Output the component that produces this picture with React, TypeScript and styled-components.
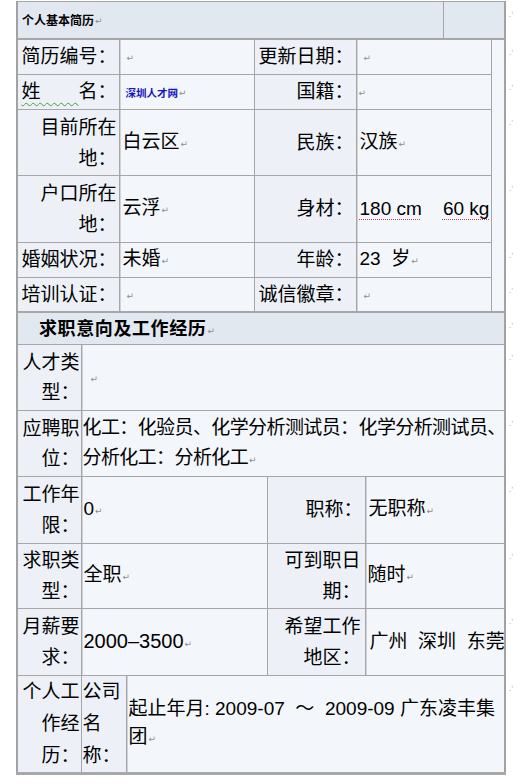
import React from "react";
import styled, { createGlobalStyle } from "styled-components";

const Global = createGlobalStyle`
  html, body { margin: 0; padding: 0; background: #ffffff; }
  body { font-family: "Liberation Sans", "Noto Sans CJK SC", sans-serif; color: #000; }
`;

const Page = styled.div`
  width: 519px;
  height: 784px;
  overflow: hidden;
  padding: 1px 0 0 16px;
  box-sizing: border-box;
`;

const Table = styled.table`
  border-collapse: collapse;
  table-layout: fixed;
  width: 503px;
`;

type Tone = "label" | "value" | "head";

const Row = styled.tr<{ $h: number }>`
  height: ${(p) => p.$h}px;
`;

const Cell = styled.td<{
  $tone?: Tone;
  $align?: "left" | "right";
  $lh?: number;
  $pl?: number;
  $pr?: number;
  $first?: boolean;
  $edge?: boolean;
  $bottom?: boolean;
  $size?: number;
  $ls?: number;
  $valign?: "top" | "middle";
}>`
  border: 1px solid #a6a6a6;
  ${(p) => (p.$first ? "border-left: 2px solid #a2a2a2;" : "")}
  ${(p) => (p.$edge ? "border-right: 2px solid #a2a2a2;" : "")}
  ${(p) => (p.$bottom ? "border-bottom: 3px solid #a8a8a8;" : "")}
  background: ${(p) =>
    p.$tone === "head" ? "#e2e8f0" : p.$tone === "label" ? "#edf1f7" : "#f3f6fa"};
  text-align: ${(p) => p.$align ?? "left"};
  vertical-align: ${(p) => p.$valign ?? "middle"};
  padding: 0 ${(p) => p.$pr ?? 2}px 0 ${(p) => p.$pl ?? 3}px;
  font-size: ${(p) => p.$size ?? 19}px;
  letter-spacing: ${(p) => p.$ls ?? 0}px;
  line-height: ${(p) => p.$lh ?? 24}px;
  white-space: nowrap;
  overflow: hidden;
`;

const ValueCell = styled(Cell)`
  box-shadow: inset 1px 0 0 #cfd3d8;
`;

const Mark = styled.td`
  border: none;
  background: transparent;
  vertical-align: top;
  padding: 9px 0 0 3px;
  font-family: "DejaVu Sans", sans-serif;
  font-size: 7px;
  line-height: 8px;
  color: #8c8c8c;
  white-space: nowrap;
`;

const Ret = styled.span`
  font-family: "DejaVu Sans", sans-serif;
  font-size: 9px;
  font-weight: normal;
  letter-spacing: 0;
  color: #8e8e8e;
  margin-left: 1px;
  vertical-align: 1px;
`;

const HeadTitle = styled.span`
  font-family: "Noto Sans CJK SC", sans-serif;
  font-weight: 700;
  font-size: 12px;
`;

const SectionTitle = styled.span`
  font-family: "Noto Sans CJK SC", sans-serif;
  font-weight: 700;
  font-size: 18px;
  letter-spacing: 0.6px;
`;

const Site = styled.span`
  font-family: "Noto Sans CJK SC", sans-serif;
  font-weight: 700;
  font-size: 10.5px;
  color: #1414c4;
`;

const Wavy = styled.span`
  text-decoration: underline wavy #3aa33a;
  text-decoration-thickness: 1px;
  text-underline-offset: 4px;
`;

const Dotted = styled.span`
  text-decoration: underline dotted #d03a6a;
  text-decoration-thickness: 1px;
  text-underline-offset: 4px;
`;

const R = () => <Ret>↵</Ret>;
const M = () => <Mark>.ˈ</Mark>;

export default function App() {
  return (
    <Page>
      <Global />
      <Table>
        <colgroup>
          <col style={{ width: 426 }} />
          <col style={{ width: 62 }} />
          <col style={{ width: 15 }} />
        </colgroup>
        <tbody>
          <Row $h={37}>
            <Cell $tone="head" $first $pl={4}>
              <HeadTitle>个人基本简历</HeadTitle>
              <R />
            </Cell>
            <Cell $tone="head" $edge />
            <M />
          </Row>
        </tbody>
      </Table>

      <Table>
        <colgroup>
          <col style={{ width: 102 }} />
          <col style={{ width: 135 }} />
          <col style={{ width: 102 }} />
          <col style={{ width: 135 }} />
          <col style={{ width: 14 }} />
          <col style={{ width: 15 }} />
        </colgroup>
        <tbody>
          <Row $h={35}>
            <Cell $tone="label" $first $align="right">简历编号：</Cell>
            <ValueCell $pl={6}><R /></ValueCell>
            <Cell $tone="label" $align="right">更新日期：</Cell>
            <ValueCell $pl={6}><R /></ValueCell>
            <Cell rowSpan={6} $edge />
            <M />
          </Row>
          <Row $h={35}>
            <Cell $tone="label" $first $align="right">
              <Wavy>姓　　</Wavy>名：
            </Cell>
            <ValueCell $pl={6}>
              <Site>深圳人才网</Site>
              <R />
            </ValueCell>
            <Cell $tone="label" $align="right">国籍：</Cell>
            <ValueCell $pl={1}><R /></ValueCell>
            <M />
          </Row>
          <Row $h={66}>
            <Cell $tone="label" $first $align="right" $lh={31}>
              目前所在
              <br />
              地：
            </Cell>
            <ValueCell>
              白云区
              <R />
            </ValueCell>
            <Cell $tone="label" $align="right">民族：</Cell>
            <ValueCell>
              汉族
              <R />
            </ValueCell>
            <M />
          </Row>
          <Row $h={67}>
            <Cell $tone="label" $first $align="right" $lh={31}>
              户口所在
              <br />
              地：
            </Cell>
            <ValueCell>
              云浮
              <R />
            </ValueCell>
            <Cell $tone="label" $align="right">身材：</Cell>
            <ValueCell>
              <Dotted>180 cm</Dotted>
              {"\u00a0\u00a0\u00a0\u00a0"}
              <Dotted>60 kg</Dotted>
            </ValueCell>
            <M />
          </Row>
          <Row $h={35}>
            <Cell $tone="label" $first $align="right">婚姻状况：</Cell>
            <ValueCell>
              未婚
              <R />
            </ValueCell>
            <Cell $tone="label" $align="right">年龄：</Cell>
            <ValueCell>
              23{"\u00a0\u00a0"}岁
              <R />
            </ValueCell>
            <M />
          </Row>
          <Row $h={34}>
            <Cell $tone="label" $first $align="right">培训认证：</Cell>
            <ValueCell $pl={6}><R /></ValueCell>
            <Cell $tone="label" $align="right">诚信徽章：</Cell>
            <ValueCell $pl={6}><R /></ValueCell>
            <M />
          </Row>
        </tbody>
      </Table>

      <Table>
        <colgroup>
          <col style={{ width: 64 }} />
          <col style={{ width: 45 }} />
          <col style={{ width: 141 }} />
          <col style={{ width: 98 }} />
          <col style={{ width: 140 }} />
          <col style={{ width: 15 }} />
        </colgroup>
        <tbody>
          <Row $h={32}>
            <Cell colSpan={5} $tone="head" $first $edge $pl={21}>
              <SectionTitle>求职意向及工作经历</SectionTitle>
              <R />
            </Cell>
            <M />
          </Row>
          <Row $h={66}>
            <Cell $tone="label" $first $align="right" $lh={30} $pr={1}>
              人才类
              <br />
              型：
            </Cell>
            <ValueCell colSpan={4} $edge $pl={8}>
              <R />
            </ValueCell>
            <M />
          </Row>
          <Row $h={66}>
            <Cell $tone="label" $first $align="right" $lh={30} $pr={1}>
              应聘职
              <br />
              位：
            </Cell>
            <ValueCell colSpan={4} $edge $pl={1} $pr={0} $lh={30} $ls={-0.6}>
              化工：化验员、化学分析测试员：化学分析测试员、
              <br />
              分析化工：分析化工
              <R />
            </ValueCell>
            <M />
          </Row>
          <Row $h={67}>
            <Cell $tone="label" $first $align="right" $lh={31} $pr={1}>
              工作年
              <br />
              限：
            </Cell>
            <ValueCell colSpan={2} $pl={2}>
              0<R />
            </ValueCell>
            <Cell $tone="label" $align="right">职称：</Cell>
            <ValueCell $edge>
              无职称
              <R />
            </ValueCell>
            <M />
          </Row>
          <Row $h={65}>
            <Cell $tone="label" $first $align="right" $lh={31} $pr={1}>
              求职类
              <br />
              型：
            </Cell>
            <ValueCell colSpan={2} $pl={2}>
              全职
              <R />
            </ValueCell>
            <Cell $tone="label" $align="right" $lh={31} $pr={4}>
              可到职日
              <br />
              期：
            </Cell>
            <ValueCell $edge $pl={2}>
              随时
              <R />
            </ValueCell>
            <M />
          </Row>
          <Row $h={67}>
            <Cell $tone="label" $first $align="right" $lh={31} $pr={1}>
              月薪要
              <br />
              求：
            </Cell>
            <ValueCell colSpan={2} $pl={2} $size={20}>
              2000–3500
              <R />
            </ValueCell>
            <Cell $tone="label" $align="right" $lh={31} $pr={4}>
              希望工作
              <br />
              地区：
            </Cell>
            <ValueCell $edge $pl={4} $pr={0}>
              广州{"\u00a0\u00a0"}深圳{"\u00a0\u00a0"}东莞
            </ValueCell>
            <M />
          </Row>
          <Row $h={98}>
            <Cell $tone="label" $first $bottom $align="right" $lh={32} $pr={1}>
              个人工
              <br />
              作经
              <br />
              历：
            </Cell>
            <Cell $tone="label" $bottom $lh={32} $pl={1}>
              公司
              <br />
              名
              <br />
              称：
            </Cell>
            <ValueCell colSpan={3} $edge $bottom $lh={28} $pl={2}>
              起止年月: 2009-07{"\u00a0\u00a0"}～{"\u00a0\u00a0"}2009-09 广东凌丰集
              <br />
              团<R />
            </ValueCell>
            <M />
          </Row>
        </tbody>
      </Table>
    </Page>
  );
}
